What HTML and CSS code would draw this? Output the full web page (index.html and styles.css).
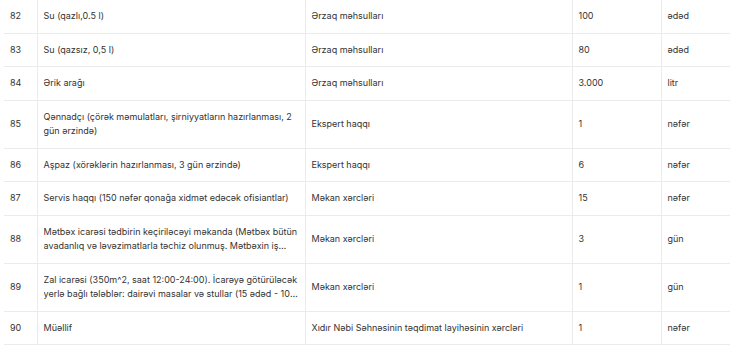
FILE: index.html
```html
<!DOCTYPE html>
<html lang="az">
<head>
<meta charset="utf-8">
<link rel="stylesheet" href="styles.css">
</head>
<body>
<div class="wrap">
<table class="items">
  <colgroup>
    <col class="c-num"><col class="c-name"><col class="c-cat"><col class="c-qty"><col class="c-unit">
  </colgroup>
  <tbody>
    <tr><td>82</td><td>Su (qazlı,0.5 l)</td><td>Ərzaq məhsulları</td><td>100</td><td>ədəd</td></tr>
    <tr><td>83</td><td>Su (qazsız, 0,5 l)</td><td>Ərzaq məhsulları</td><td>80</td><td>ədəd</td></tr>
    <tr><td>84</td><td>Ərik arağı</td><td>Ərzaq məhsulları</td><td>3.000</td><td>litr</td></tr>
    <tr><td>85</td><td>Qənnadçı (çörək məmulatları, şirniyyatların hazırlanması, 2 gün ərzində)</td><td>Ekspert haqqı</td><td>1</td><td>nəfər</td></tr>
    <tr><td>86</td><td>Aşpaz (xörəklərin hazırlanması, 3 gün ərzində)</td><td>Ekspert haqqı</td><td>6</td><td>nəfər</td></tr>
    <tr><td>87</td><td>Servis haqqı (150 nəfər qonağa xidmət edəcək ofisiantlar)</td><td>Məkan xərcləri</td><td>15</td><td>nəfər</td></tr>
    <tr><td>88</td><td><div class="clamp">Mətbəx icarəsi tədbirin keçiriləcəyi məkanda (Mətbəx bütün avadanlıq və ləvəzimatlarla təchiz olunmuş. Mətbəxin iş rejimi tədbir günü boyunca)</div></td><td>Məkan xərcləri</td><td>3</td><td>gün</td></tr>
    <tr><td>89</td><td><div class="clamp">Zal icarəsi (350m^2, saat 12:00-24:00). İcarəyə götürüləcək yerlə bağlı tələblər: dairəvi masalar və stullar (15 ədəd - 10 nəfərlik)</div></td><td>Məkan xərcləri</td><td>1</td><td>gün</td></tr>
    <tr><td>90</td><td>Müəllif</td><td>Xıdır Nəbi Səhnəsinin təqdimat layihəsinin xərcləri</td><td>1</td><td>nəfər</td></tr>
  </tbody>
</table>
</div>
</body>
</html>
```

FILE: styles.css
```css
html, body {
  margin: 0;
  padding: 0;
  background: #ffffff;
  overflow: hidden;
}
.wrap {
  padding-left: 4px;
  width: 760px;
}
.items {
  border-collapse: collapse;
  table-layout: fixed;
  width: 756px;
  font-family: Inter, "Noto Sans", sans-serif;
  font-size: 9px;
  color: #333333;
}
.c-num { width: 33px; }
.c-name { width: 268px; }
.c-cat { width: 267px; }
.c-qty { width: 89px; }
.c-unit { width: 99px; }
.items td {
  border: 1px solid #ebebeb;
  padding: 9px 5px 9px 6px;
  line-height: 14.5px;
  vertical-align: middle;
  text-align: left;
}
.items td:first-child { border-left: none; }
.items tr:first-child td { border-top: none; }
.clamp {
  display: -webkit-box;
  -webkit-box-orient: vertical;
  -webkit-line-clamp: 2;
  overflow: hidden;
}
```
